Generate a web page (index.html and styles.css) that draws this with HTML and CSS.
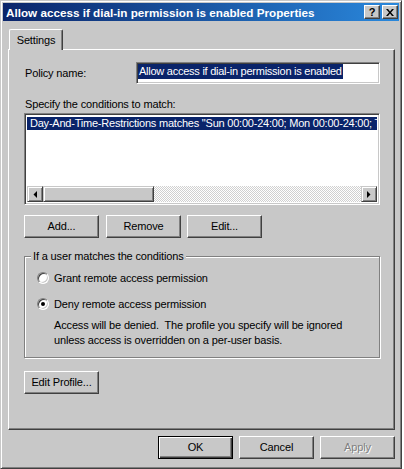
FILE: index.html
```html
<!DOCTYPE html>
<html>
<head>
<meta charset="utf-8">
<link rel="stylesheet" href="styles.css">
</head>
<body>
<div class="window">
  <div class="titlebar">
    <span class="title">Allow access if dial-in permission is enabled Properties</span>
    <div class="tb-buttons">
      <div class="tb-btn help">?</div>
      <div class="tb-btn close">
        <svg width="8" height="7" viewBox="0 0 8 7"><path d="M0 0h2l2 2.5L6 0h2L5 3.5L8 7H6L4 4.5L2 7H0l3-3.5z" fill="#000"/></svg>
      </div>
    </div>
  </div>
  <div class="client">
    <div class="tab">Settings</div>
    <div class="panel">
      <div class="name-row">
        <span class="name-label">Policy name:</span>
        <div class="textbox"><span class="sel">Allow access if dial-in permission is enabled</span></div>
      </div>
      <div class="caption">Specify the conditions to match:</div>
      <div class="listbox">
        <div class="items">
          <div class="item selected">Day-And-Time-Restrictions matches "Sun 00:00-24:00; Mon 00:00-24:00; Tue 00:00-24:00; Wed 00:00-24:00"</div>
        </div>
        <div class="hscroll">
          <div class="sb-btn"><svg width="4" height="7" viewBox="0 0 4 7"><path d="M4 0V7L0.5 3.5z" fill="#000"/></svg></div>
          <div class="sb-thumb"></div>
          <div class="sb-track"></div>
          <div class="sb-btn"><svg width="4" height="7" viewBox="0 0 4 7"><path d="M0 0V7L3.5 3.5z" fill="#000"/></svg></div>
        </div>
      </div>
      <div class="btn-row">
        <div class="btn">Add...</div>
        <div class="btn gap7">Remove</div>
        <div class="btn gap6">Edit...</div>
      </div>
      <div class="group">
        <div class="legend">If a user matches the conditions</div>
        <div class="radio-row first"><span class="radio"></span><span>Grant remote access permission</span></div>
        <div class="radio-row second"><span class="radio checked"></span><span>Deny remote access permission</span></div>
        <div class="desc">Access will be denied.&nbsp; The profile you specify will be ignored<br>unless access is overridden on a per-user basis.</div>
      </div>
      <div class="btn edit-profile">Edit Profile...</div>
    </div>
    <div class="dlg-buttons">
      <div class="btn default">OK</div>
      <div class="btn">Cancel</div>
      <div class="btn disabled">Apply</div>
    </div>
  </div>
</div>
</body>
</html>
```

FILE: styles.css
```css
* { box-sizing: border-box; }
html, body { margin: 0; padding: 0; background: #ffffff; }
body {
  font-family: "Liberation Sans", Arial, sans-serif;
  font-size: 11px;
  letter-spacing: -0.15px;
  color: #000;
}
.window {
  width: 402px;
  height: 469px;
  background: #c8c8c8;
  border: 1px solid;
  border-color: #c8c8c8 #404040 #404040 #c8c8c8;
  box-shadow: inset 1px 1px #ffffff, inset -1px -1px #808080;
  padding: 2px;
  display: flex;
  flex-direction: column;
}
.titlebar {
  height: 18px;
  flex: none;
  display: flex;
  align-items: center;
  background: linear-gradient(to right, #0a246a, #2a88dc);
  padding: 0 1px 0 3px;
}
.title {
  flex: 1;
  color: #fff;
  font-weight: bold;
  font-size: 11.7px;
  letter-spacing: 0;
  white-space: nowrap;
  overflow: hidden;
}
.tb-buttons { display: flex; gap: 2px; }
.tb-btn {
  width: 16px;
  height: 14px;
  background: #c8c8c8;
  border: 1px solid;
  border-color: #ffffff #404040 #404040 #ffffff;
  box-shadow: inset -1px -1px #808080;
  display: flex;
  align-items: center;
  justify-content: center;
  font-weight: bold;
  font-size: 11px;
  line-height: 12px;
  letter-spacing: 0;
}
.tb-btn.close svg { display: block; margin-right: 1px; }
.client {
  flex: 1;
  display: flex;
  flex-direction: column;
  padding: 8px 4px 0 5px;
}
.tab {
  align-self: flex-start;
  width: 54px;
  height: 21px;
  margin-left: 1px;
  margin-bottom: -1px;
  position: relative;
  z-index: 1;
  background: #c8c8c8;
  border-top: 1px solid #fff;
  border-left: 1px solid #fff;
  border-right: 1px solid #404040;
  border-radius: 2px 2px 0 0;
  box-shadow: inset -1px 0 #808080;
  display: flex;
  align-items: center;
  justify-content: center;
  padding-bottom: 1px;
}
.panel {
  height: 381px;
  flex: none;
  border: 1px solid;
  border-color: #ffffff #404040 #404040 #ffffff;
  box-shadow: inset -1px -1px #808080;
  padding: 12px 12px 0 15px;
  display: flex;
  flex-direction: column;
  align-items: flex-start;
}
.name-row { display: flex; align-items: center; width: 356px; }
.name-label { width: 112px; flex: none; padding-left: 1px; }
.textbox, .listbox {
  background: #fff;
  border: 1px solid;
  border-color: #808080 #ffffff #ffffff #808080;
  box-shadow: inset 1px 1px #404040, inset -1px -1px #c8c8c8;
}
.textbox {
  width: 244px;
  height: 22px;
  padding: 1px 0 0 1px;
  overflow: hidden;
  white-space: nowrap;
}
.sel {
  display: inline-block;
  background: #0a246a;
  color: #fff;
  line-height: 15px;
  padding: 0 1px;
  letter-spacing: -0.25px;
}
.caption { margin-top: 14px; line-height: 13px; padding-left: 1px; }
.listbox {
  margin-top: 2px;
  width: 356px;
  height: 92px;
  padding: 2px;
  display: flex;
  flex-direction: column;
}
.items { flex: 1; overflow: hidden; padding-top: 1px; }
.item {
  height: 13px;
  line-height: 13px;
  padding-left: 3px;
  white-space: nowrap;
  overflow: hidden;
  letter-spacing: -0.22px;
}
.item.selected { background: #0a246a; color: #fff; }
.hscroll { height: 16px; flex: none; display: flex; }
.sb-btn, .sb-thumb {
  background: #c8c8c8;
  border: 1px solid;
  border-color: #c8c8c8 #404040 #404040 #c8c8c8;
  box-shadow: inset 1px 1px #ffffff, inset -1px -1px #808080;
}
.sb-btn {
  width: 16px;
  height: 16px;
  flex: none;
  display: flex;
  align-items: center;
  justify-content: center;
}
.sb-btn svg { display: block; }
.sb-thumb { width: 111px; flex: none; }
.sb-track {
  flex: 1;
  background: repeating-conic-gradient(#ffffff 0 25%, #c8c8c8 0 50%) 0 0 / 2px 2px;
  opacity: 0.85;
}
.btn-row { display: flex; margin-top: 10px; }
.btn {
  width: 75px;
  height: 23px;
  flex: none;
  background: #c8c8c8;
  border: 1px solid;
  border-color: #ffffff #404040 #404040 #ffffff;
  box-shadow: inset -1px -1px #808080;
  display: flex;
  align-items: center;
  justify-content: center;
  padding-bottom: 1px;
}
.btn.gap7 { margin-left: 7px; }
.btn.gap6 { margin-left: 6px; }
.btn.default {
  border-color: #000;
  box-shadow: inset 1px 1px #ffffff, inset -1px -1px #404040, inset -2px -2px #808080;
}
.btn.disabled { color: #808080; text-shadow: 1px 1px #ffffff; }
.group {
  margin-top: 18px;
  width: 356px;
  border: 1px solid #808080;
  box-shadow: inset 1px 1px #ffffff, 1px 1px #ffffff;
  padding-bottom: 9px;
}
.legend {
  display: table;
  margin: -7px 0 0 6px;
  padding: 0 2px;
  background: #c8c8c8;
  line-height: 13px;
}
.radio-row {
  display: flex;
  align-items: center;
  gap: 5px;
  height: 13px;
  margin-left: 12px;
}
.radio-row.first { margin-top: 8px; }
.radio-row.second { margin-top: 13px; }
.radio {
  width: 12px;
  height: 12px;
  flex: none;
  border-radius: 50%;
  background: #fff;
  border: 1px solid;
  border-color: #808080 #ffffff #ffffff #808080;
  box-shadow: inset 1px 1px #404040, inset -1px -1px #c8c8c8;
  display: flex;
  align-items: center;
  justify-content: center;
}
.radio.checked::after {
  content: "";
  width: 4px;
  height: 4px;
  border-radius: 50%;
  background: #000;
}
.desc { margin: 8px 0 0 29px; line-height: 15px; }
.edit-profile { margin-top: 13px; }
.dlg-buttons {
  display: flex;
  justify-content: flex-end;
  gap: 6px;
  margin-top: 6px;
}
```
